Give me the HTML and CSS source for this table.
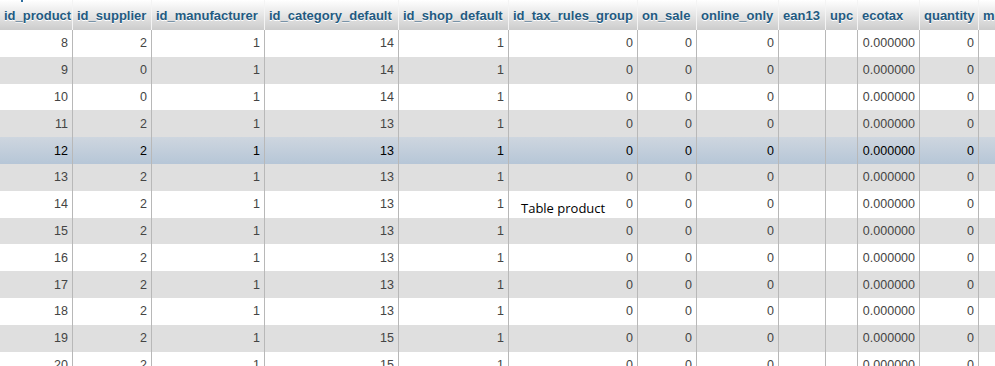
FILE: index.html
```html
<!DOCTYPE html>
<html lang="en">
<head>
<meta charset="utf-8">
<title>Table product</title>
<link rel="stylesheet" href="styles.css">
</head>
<body>
<div class="wrap">
  <span class="top-mark"></span>
  <table class="data">
    <thead>
      <tr>
        <th class="c1">id_product</th>
        <th class="c2">id_supplier</th>
        <th class="c3">id_manufacturer</th>
        <th class="c4">id_category_default</th>
        <th class="c5">id_shop_default</th>
        <th class="c6">id_tax_rules_group</th>
        <th class="c7">on_sale</th>
        <th class="c8">online_only</th>
        <th class="c9">ean13</th>
        <th class="c10">upc</th>
        <th class="c11">ecotax</th>
        <th class="c12">quantity</th>
        <th class="c13">minimal_quantity</th>
      </tr>
    </thead>
    <tbody>
      <tr class="odd"><td>8</td><td>2</td><td>1</td><td>14</td><td>1</td><td>0</td><td>0</td><td>0</td><td></td><td></td><td>0.000000</td><td>0</td><td>1</td></tr>
      <tr class="even"><td>9</td><td>0</td><td>1</td><td>14</td><td>1</td><td>0</td><td>0</td><td>0</td><td></td><td></td><td>0.000000</td><td>0</td><td>1</td></tr>
      <tr class="odd"><td>10</td><td>0</td><td>1</td><td>14</td><td>1</td><td>0</td><td>0</td><td>0</td><td></td><td></td><td>0.000000</td><td>0</td><td>1</td></tr>
      <tr class="even"><td>11</td><td>2</td><td>1</td><td>13</td><td>1</td><td>0</td><td>0</td><td>0</td><td></td><td></td><td>0.000000</td><td>0</td><td>1</td></tr>
      <tr class="hover"><td>12</td><td>2</td><td>1</td><td>13</td><td>1</td><td>0</td><td>0</td><td>0</td><td></td><td></td><td>0.000000</td><td>0</td><td>1</td></tr>
      <tr class="even"><td>13</td><td>2</td><td>1</td><td>13</td><td>1</td><td>0</td><td>0</td><td>0</td><td></td><td></td><td>0.000000</td><td>0</td><td>1</td></tr>
      <tr class="odd"><td>14</td><td>2</td><td>1</td><td>13</td><td>1</td><td>0</td><td>0</td><td>0</td><td></td><td></td><td>0.000000</td><td>0</td><td>1</td></tr>
      <tr class="even"><td>15</td><td>2</td><td>1</td><td>13</td><td>1</td><td>0</td><td>0</td><td>0</td><td></td><td></td><td>0.000000</td><td>0</td><td>1</td></tr>
      <tr class="odd"><td>16</td><td>2</td><td>1</td><td>13</td><td>1</td><td>0</td><td>0</td><td>0</td><td></td><td></td><td>0.000000</td><td>0</td><td>1</td></tr>
      <tr class="even"><td>17</td><td>2</td><td>1</td><td>13</td><td>1</td><td>0</td><td>0</td><td>0</td><td></td><td></td><td>0.000000</td><td>0</td><td>1</td></tr>
      <tr class="odd"><td>18</td><td>2</td><td>1</td><td>13</td><td>1</td><td>0</td><td>0</td><td>0</td><td></td><td></td><td>0.000000</td><td>0</td><td>1</td></tr>
      <tr class="even"><td>19</td><td>2</td><td>1</td><td>15</td><td>1</td><td>0</td><td>0</td><td>0</td><td></td><td></td><td>0.000000</td><td>0</td><td>1</td></tr>
      <tr class="odd"><td>20</td><td>2</td><td>1</td><td>15</td><td>1</td><td>0</td><td>0</td><td>0</td><td></td><td></td><td>0.000000</td><td>0</td><td>1</td></tr>
    </tbody>
  </table>
  <div class="tooltip">Table product</div>
</div>
</body>
</html>
```

FILE: styles.css
```css
html, body {
  margin: 0;
  padding: 0;
  overflow: hidden;
  background: #fff;
}

.wrap {
  position: relative;
  width: 995px;
  height: 366px;
  overflow: hidden;
}

.top-mark {
  position: absolute;
  left: 21px;
  top: 0;
  width: 2px;
  height: 2px;
  background: #2d6ea0;
  z-index: 2;
}

.data {
  table-layout: fixed;
  width: 1109px;
  border-collapse: separate;
  border-spacing: 0;
  font-family: "Liberation Sans", Arial, sans-serif;
}

.data th,
.data td {
  box-sizing: border-box;
  border-right: 1px solid #b8b8b8;
  white-space: nowrap;
  overflow: hidden;
  padding: 0 4px;
}

.data thead tr {
  height: 30px;
}

.data th {
  font-size: 13px;
  font-weight: bold;
  color: #235a81;
  text-align: left;
  text-shadow: 0 1px 0 #fff;
  background: linear-gradient(#ffffff, #cccccc);
  border-right: 1px solid #f4f4f4;
  padding-top: 1px;
}

.c1 { width: 73px; }
.c2 { width: 79px; }
.c3 { width: 113px; }
.c4 { width: 134px; }
.c5 { width: 110px; }
.c6 { width: 129px; }
.c7 { width: 59px; }
.c8 { width: 82px; }
.c9 { width: 47px; }
.c10 { width: 32px; }
.c11 { width: 62px; }
.c12 { width: 59px; }
.c13 { width: 130px; }

.data tbody tr {
  height: 26.8px;
}

.data td {
  font-size: 12.5px;
  color: #444;
  text-align: right;
}

.data tr.odd {
  background: #fff;
}

.data tr.even {
  background: #dfdfdf;
}

.data tr.hover {
  background: linear-gradient(#ced6df, #b6c6d7);
}

.data tr.hover td {
  color: #000;
}

.tooltip {
  position: absolute;
  left: 521px;
  top: 199px;
  font-family: "Open Sans", "Segoe UI", sans-serif;
  font-size: 13px;
  line-height: 18px;
  color: #000;
  z-index: 3;
}
```
